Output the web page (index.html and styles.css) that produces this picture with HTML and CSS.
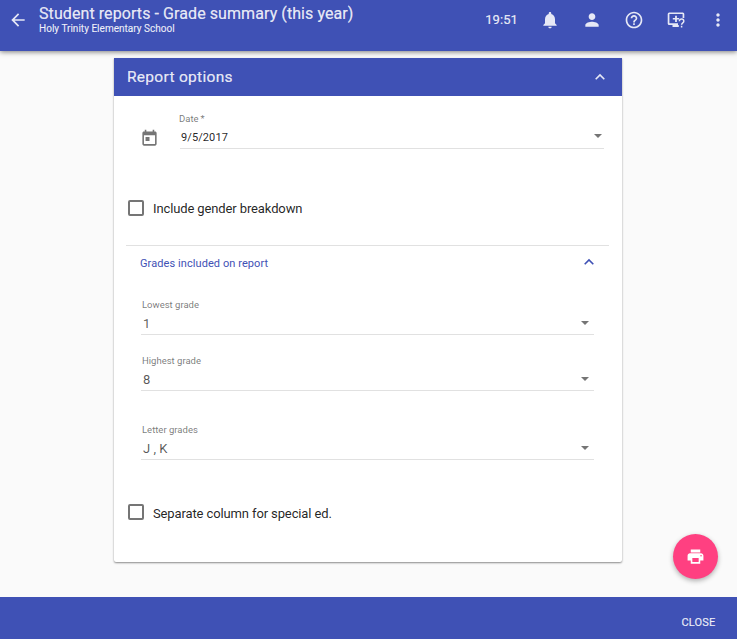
FILE: index.html
```html
<!DOCTYPE html>
<html lang="en">
<head>
<meta charset="utf-8">
<title>Student reports</title>
<link rel="stylesheet" href="styles.css">
</head>
<body>
<header class="toolbar">
  <svg class="back" viewBox="0 0 24 24"><path d="M20 11H7.83l5.59-5.59L12 4l-8 8 8 8 1.41-1.41L7.83 13H20v-2z"/></svg>
  <div class="titles">
    <h1 class="title">Student reports - Grade summary (this year)</h1>
    <p class="school">Holy Trinity Elementary School</p>
  </div>
  <div class="actions">
    <span class="clock">19:51</span>
    <svg class="icon" viewBox="0 0 24 24"><path d="M12 22c1.1 0 2-.9 2-2h-4c0 1.1.9 2 2 2zm6-6v-5c0-3.07-1.63-5.64-4.5-6.32V4c0-.83-.67-1.5-1.5-1.5s-1.5.67-1.5 1.5v.68C7.64 5.36 6 7.92 6 11v5l-2 2v1h16v-1l-2-2z"/></svg>
    <svg class="icon" viewBox="0 0 24 24"><path d="M12 12c2.21 0 4-1.79 4-4s-1.79-4-4-4-4 1.790-4 4 1.790 4 4 4zm0 2c-2.670 0-8 1.340-8 4v2h16v-2c0-2.660-5.330-4-8-4z"/></svg>
    <svg class="icon" viewBox="0 0 24 24"><path d="M11 18h2v-2h-2v2zm1-16C6.480 2 2 6.480 2 12s4.480 10 10 10 10-4.480 10-10S17.520 2 12 2zm0 18c-4.410 0-8-3.590-8-8s3.590-8 8-8 8 3.590 8 8-3.590 8-8 8zm0-14c-2.210 0-4 1.790-4 4h2c0-1.100.9-2 2-2s2 .9 2 2c0 2-3 1.750-3 5h2c0-2.250 3-2.500 3-5 0-2.210-1.790-4-4-4z"/></svg>
    <svg class="icon" viewBox="0 0 20 20"><path fill-rule="evenodd" d="M3.200 2.500H16.800Q18.300 2.500 18.300 4V8H16.600V4.100H3.400V13.300H12V15H12.800V17H6.500V15H3.200Q1.700 15 1.700 13.500V4Q1.700 2.500 3.200 2.500z"/><path d="M9.100 5.700h1.800v2.200h2.300v1.700h-2.300v2.300H9.100V9.600H6.800V7.900h2.300z"/><path class="stroke" d="M13.400 11.200c0-3 4.400-2.800 4.400 0 0 1.700-2.200 1.500-2.200 3.500M15.600 15.800v1.700"/></svg>
    <svg class="icon" viewBox="0 0 24 24"><path d="M12 8c1.100 0 2-.9 2-2s-.9-2-2-2-2 .9-2 2 .9 2 2 2zm0 2c-1.100 0-2 .9-2 2s.9 2 2 2 2-.9 2-2-.9-2-2-2zm0 6c-1.100 0-2 .9-2 2s.9 2 2 2 2-.9 2-2-.9-2-2-2z"/></svg>
  </div>
</header>
<main class="content">
  <section class="card">
    <div class="card-head">
      <h2 class="card-title">Report options</h2>
      <svg class="chevron" viewBox="0 0 12 8"><path d="M1.700 6.300 6 2l4.300 4.300"/></svg>
    </div>
    <div class="date-row">
      <svg class="calendar" viewBox="0 0 24 24"><path d="M19 3h-1V1h-2v2H8V1H6v2H5c-1.110 0-1.990.9-1.990 2L3 19c0 1.100.89 2 2 2h14c1.100 0 2-.9 2-2V5c0-1.100-.9-2-2-2zm0 16H5V8h14v11zM7 10h5v5H7z"/></svg>
      <div class="field date-field">
        <span class="label">Date<span class="required">*</span></span>
        <div class="value"><span>9/5/2017</span><i class="caret"></i></div>
      </div>
    </div>
    <label class="check"><span class="box"></span><span>Include gender breakdown</span></label>
    <div class="group">
      <div class="group-head">
        <h3 class="group-title">Grades included on report</h3>
        <svg class="chevron" viewBox="0 0 12 8"><path d="M1.700 6.300 6 2l4.300 4.300"/></svg>
      </div>
      <div class="field grade">
        <span class="label">Lowest grade</span>
        <div class="value"><span>1</span><i class="caret"></i></div>
      </div>
      <div class="field grade">
        <span class="label">Highest grade</span>
        <div class="value"><span>8</span><i class="caret"></i></div>
      </div>
      <div class="field grade letters">
        <span class="label">Letter grades</span>
        <div class="value"><span>J , K</span><i class="caret"></i></div>
      </div>
    </div>
    <label class="check special"><span class="box"></span><span>Separate column for special ed.</span></label>
  </section>
</main>
<div class="fab"><svg viewBox="0 0 24 24"><path d="M19 8H5c-1.660 0-3 1.340-3 3v6h4v4h12v-4h4v-6c0-1.660-1.340-3-3-3zm-3 11H8v-5h8v5zm3-7c-.55 0-1-.45-1-1s.45-1 1-1 1 .45 1 1-.45 1-1 1zm-1-9H6v4h12V3z"/></svg></div>
<footer class="footer"><span class="close">CLOSE</span></footer>
</body>
</html>
```
FILE: styles.css
```css
* { box-sizing: border-box; }
body {
  margin: 0;
  height: 639px;
  display: flex;
  flex-direction: column;
  overflow: hidden;
  background: #fafafa;
  font-family: Roboto, sans-serif;
  color: rgba(0, 0, 0, .87);
}
h1, h2, h3, p { margin: 0; font-weight: 400; }
svg { display: block; flex: none; fill: currentColor; }
.toolbar {
  height: 51px;
  flex: none;
  display: flex;
  align-items: flex-start;
  padding: 5px 9px 0;
  background: #3f51b5;
  color: rgba(255, 255, 255, .87);
  box-shadow: 0 1px 5px rgba(0, 0, 0, .5);
}
.back { width: 20px; height: 20px; margin: 5px 10px 0 -1px; }
.titles { flex: 1; padding-left: 1px; }
.title { font-size: 16px; line-height: 18px; letter-spacing: .08px; -webkit-text-stroke: .2px; white-space: nowrap; }
.school { font-size: 10px; line-height: 12px; letter-spacing: .02px; -webkit-text-stroke: .15px; }
.actions { display: flex; align-items: center; height: 29px; gap: 22px; margin-right: .5px; }
.clock { font-size: 13px; letter-spacing: .1px; margin-right: -.5px; -webkit-text-stroke: .2px; }
.icon { width: 20px; height: 20px; }
.stroke { fill: none; stroke: currentColor; stroke-width: 1.5; }
.content { flex: 1; padding-top: 7px; }
.card {
  width: 508px;
  height: 504px;
  margin-left: 114px;
  background: #fff;
  border-radius: 0 0 2px 2px;
  box-shadow: 0 1px 2px rgba(0, 0, 0, .45);
}
.card-head {
  height: 38px;
  display: flex;
  align-items: center;
  justify-content: space-between;
  padding: 0 16px 0 13px;
  background: #3f51b5;
  color: rgba(255, 255, 255, .87);
}
.card-title { font-size: 15.5px; letter-spacing: .3px; -webkit-text-stroke: .2px; }
.chevron { width: 12px; height: 8px; fill: none; stroke: currentColor; stroke-width: 1.6; }
.date-row { display: flex; padding: 17px 18px 0 26px; height: 104px; }
.calendar { width: 19px; height: 19px; margin-top: 16px; color: #757575; }
.field { display: flex; flex-direction: column; }
.label { font-size: 9.500px; line-height: 12px; color: rgba(0, 0, 0, .54); padding-left: 1px; }
.required { margin-left: 2px; }
.date-field { flex: 1; margin-left: 19px; height: 36px; }
.date-field .value { margin-left: 2px; height: 24px; font-size: 11px; letter-spacing: .1px; color: rgba(0, 0, 0, .87); padding: 0 2px 0 1px; }
.value {
  display: flex;
  align-items: center;
  justify-content: space-between;
  height: 24px;
  padding: 0 5px 0 2px;
  border-bottom: 1px solid #e1e1e1;
  font-size: 13px;
  color: rgba(0, 0, 0, .66);
}
.value span { position: relative; top: 1px; }
.caret { border: 4px solid transparent; border-top-color: #757575; border-bottom: 0; }
.date-field .caret { margin-top: -2px; }
.check { display: flex; align-items: center; height: 16px; padding-left: 14px; font-size: 13px; letter-spacing: -.12px; }
.box { width: 16px; height: 16px; margin-right: 9px; border: 2px solid #757575; border-radius: 2px; }
.group { margin: 29px 13px 0 12px; border-top: 1px solid #e1e1e1; }
.group-head { display: flex; align-items: center; justify-content: space-between; height: 34px; padding: 0 14px 0 14px; color: #3f51b5; }
.group-title { font-size: 11px; letter-spacing: .08px; }
.group .chevron { margin-top: -3px; }
.grade { margin: 19px 15px 0; height: 37px; }
.grade .caret { border-width: 4px 4px 0; }
.letters { margin-top: 32px; }
.special { margin-top: 43px; }
.special span:last-child { position: relative; top: 1px; }
.fab {
  position: absolute;
  left: 673px;
  top: 534px;
  width: 45px;
  height: 45px;
  display: grid;
  place-items: center;
  border-radius: 50%;
  background: #ff4081;
  color: #fff;
  box-shadow: 0 2px 5px rgba(0, 0, 0, .3);
}
.fab svg { width: 19px; height: 19px; margin-right: 1px; }
.footer {
  height: 42px;
  flex: none;
  display: flex;
  align-items: center;
  justify-content: flex-end;
  padding: 8px 21.5px 0 0;
  background: #3f51b5;
  color: rgba(255, 255, 255, .87);
}
.close { font-size: 11px; letter-spacing: .2px; -webkit-text-stroke: .2px; }
```
